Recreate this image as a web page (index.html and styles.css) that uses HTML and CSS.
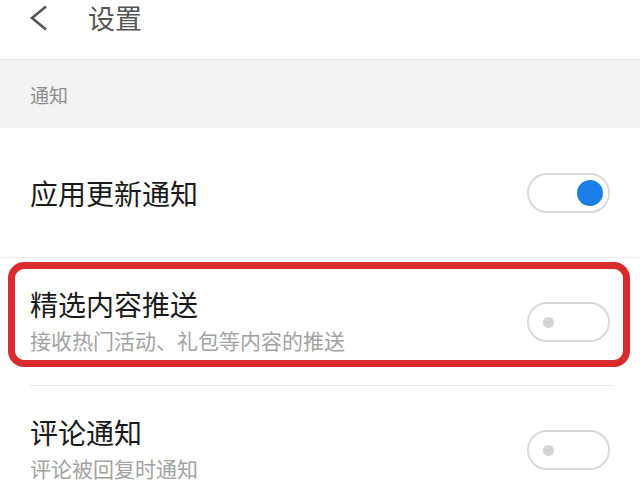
FILE: index.html
```html
<!DOCTYPE html>
<html lang="zh-CN">
<head>
<meta charset="utf-8">
<title>设置</title>
<link rel="stylesheet" href="styles.css">
</head>
<body>
<div class="page">
  <header class="topbar">
    <svg class="back" width="20" height="26" viewBox="0 0 20 26" aria-hidden="true">
      <polyline points="17,1.5 3,13 17,24.5" fill="none" stroke="#555" stroke-width="2.6" stroke-linejoin="miter"/>
    </svg>
    <h1 class="title">设置</h1>
  </header>
  <div class="section-head">通知</div>
  <div class="row row-first">
    <div class="texts">
      <div class="row-title">应用更新通知</div>
    </div>
    <div class="toggle on"><span class="knob"></span></div>
  </div>
  <div class="row row-mid">
    <div class="texts">
      <div class="row-title">精选内容推送</div>
      <div class="row-sub">接收热门活动、礼包等内容的推送</div>
    </div>
    <div class="toggle off"><span class="knob"></span></div>
    <div class="highlight"></div>
  </div>
  <div class="row">
    <div class="texts">
      <div class="row-title">评论通知</div>
      <div class="row-sub">评论被回复时通知</div>
    </div>
    <div class="toggle off"><span class="knob"></span></div>
  </div>
</div>
</body>
</html>
```
FILE: styles.css
```css
html, body {
  margin: 0;
  padding: 0;
  background: #fff;
}
body {
  font-family: "Noto Sans CJK SC", "Noto Sans", sans-serif;
  width: 640px;
  height: 481px;
  overflow: hidden;
}
.page {
  display: flex;
  flex-direction: column;
}
.topbar {
  height: 59px;
  border-bottom: 1px solid #e6e6e6;
  display: flex;
  align-items: flex-start;
  padding-left: 29px;
  box-sizing: content-box;
  background: #fff;
}
.back {
  margin-top: 5px;
  flex: none;
}
.title {
  margin: 0 0 0 39px;
  font-size: 27px;
  font-weight: 400;
  line-height: 35px;
  color: #555;
}
.section-head {
  height: 68px;
  background: #f3f3f3;
  padding-left: 30px;
  display: flex;
  align-items: center;
  font-size: 19px;
  color: #8c8c8c;
  line-height: 24px;
  padding-top: 2px;
  box-sizing: border-box;
}
.row {
  position: relative;
  height: 128px;
  display: flex;
  align-items: center;
  justify-content: space-between;
  padding: 0 30px;
  box-sizing: border-box;
}
.row-first {
  height: 130px;
  border-bottom: 1px solid #eeeeee;
  margin: 0 0 0 0;
}
.row-mid::after {
  content: "";
  position: absolute;
  left: 30px;
  right: 28px;
  bottom: 0;
  border-bottom: 1px solid #e6e6e6;
}
.texts {
  display: flex;
  flex-direction: column;
}
.row-title {
  font-size: 28px;
  line-height: 36px;
  color: #1a1a1a;
}
.row-sub {
  font-size: 21px;
  line-height: 36px;
  color: #a3a3a3;
}
.toggle {
  width: 83px;
  height: 40px;
  border: 2px solid #dadada;
  border-radius: 22px;
  box-sizing: border-box;
  display: flex;
  align-items: center;
  flex: none;
}
.toggle.on {
  justify-content: flex-end;
  padding-right: 5px;
}
.toggle.on .knob {
  width: 26px;
  height: 26px;
  border-radius: 50%;
  background: #1a80e8;
}
.toggle.off {
  padding-left: 14px;
}
.toggle.off .knob {
  width: 11px;
  height: 11px;
  border-radius: 50%;
  background: #d4d4d4;
}
.highlight {
  position: absolute;
  left: 8px;
  top: 4px;
  width: 622px;
  height: 105px;
  border: 7px solid #d92a2c;
  border-radius: 16px;
  box-sizing: border-box;
  pointer-events: none;
}
```
